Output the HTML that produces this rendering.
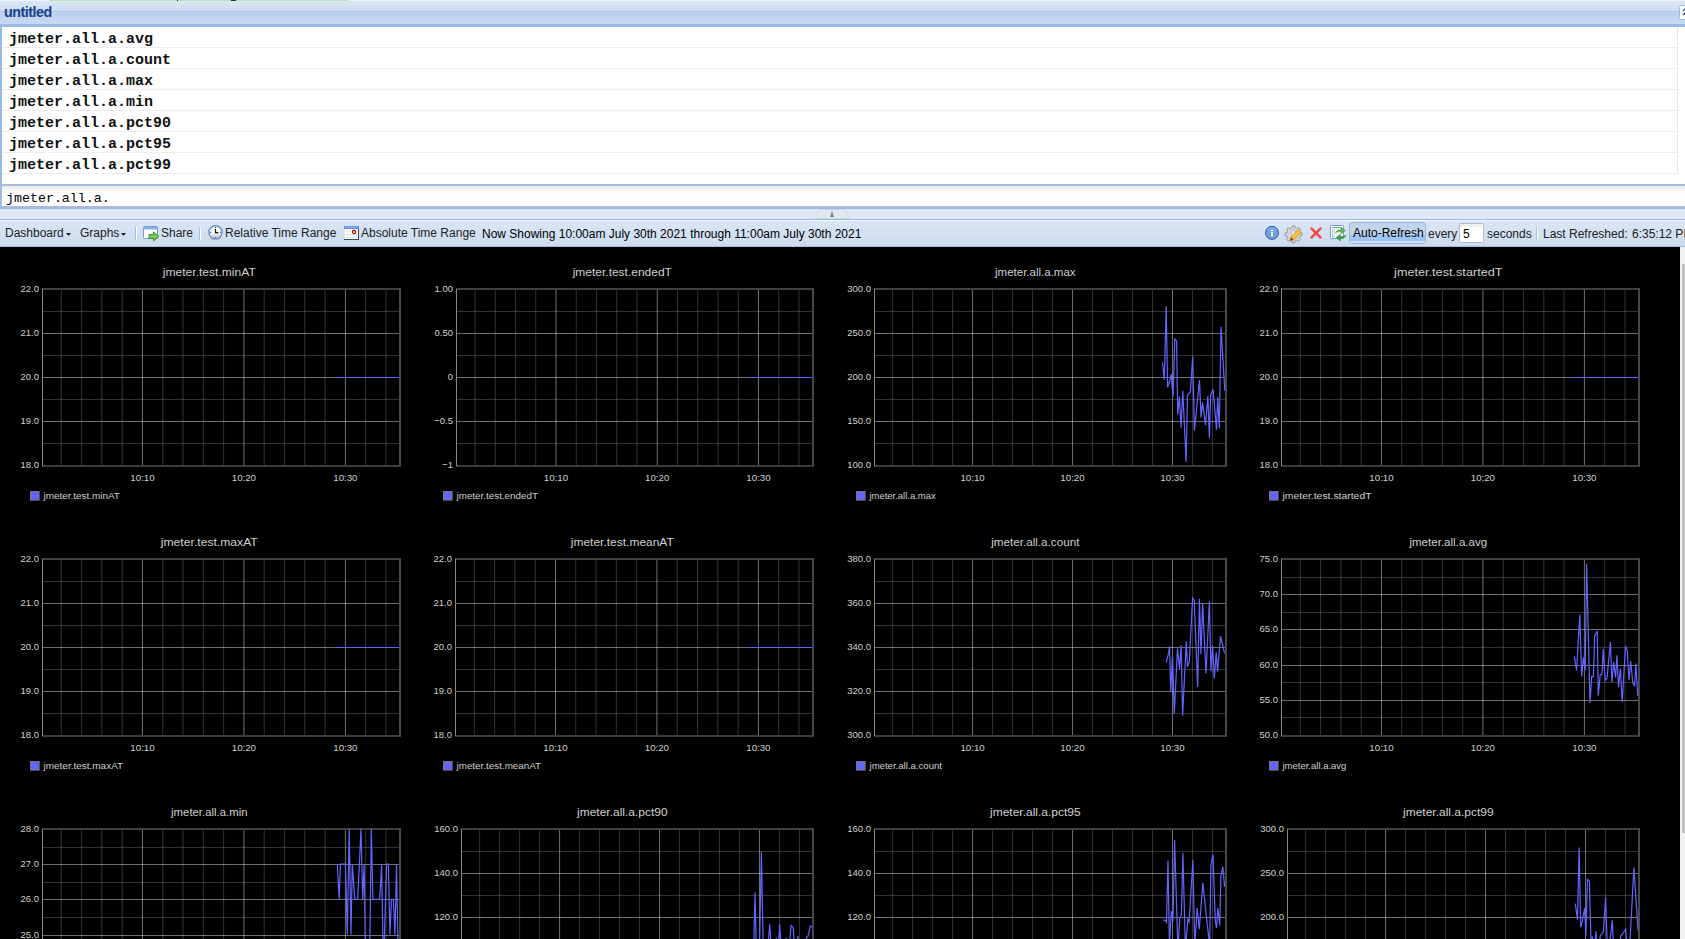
<!DOCTYPE html>
<html><head><meta charset="utf-8"><style>
*{margin:0;padding:0;box-sizing:border-box}
html,body{width:1685px;height:939px;overflow:hidden;background:#000;font-family:"Liberation Sans",sans-serif}
.abs{position:absolute}
#top0{left:0;top:0;width:1685px;height:1px;background:#eef3fa}
#green{left:49px;top:0;width:300px;height:1px;background:#b8e8b0}
#hdr{left:0;top:1px;width:1685px;height:23px;background:linear-gradient(#dae7f6,#cddcf1 10px,#aac6ea 10px,#aac6ea 11px,#bad0ee 11px,#c8daf2)}
#hdrb{left:0;top:24px;width:1685px;height:3px;background:#99bbe8}
#title{left:4px;top:4px;letter-spacing:-0.5px;font:bold 14.3px "Liberation Sans",sans-serif;color:#15428b;line-height:16px}
#list{left:0;top:27px;width:1685px;height:157px;background:#fff;border-left:2px solid #99bbe8}
.row{position:absolute;left:0;width:1676px;height:21px;border-bottom:1px solid #ededed;border-right:1px solid #e6e6e6;font:bold 15px "Liberation Mono",monospace;line-height:20px;padding-left:7px;padding-top:3px;color:#111}
#vline{left:1677px;top:27px;width:1px;height:157px;background:#e4e4e4}
#listb{left:0;top:184px;width:1685px;height:1px;background:#99bbe8}
#input{left:0;top:185px;width:1685px;height:22px;background:linear-gradient(#e6e8eb,#f6f7f7 4px,#fff 8px);border-left:1px solid #99bbe8;box-shadow:inset 1px 0 0 #b5b8c8;border-top:1px solid #b5b8c8;border-bottom:1px solid #b5b8c8;font:13.3px "Liberation Mono",monospace;line-height:19px;padding-left:5px;padding-top:3px;color:#000}
#inb{left:0;top:207px;width:1685px;height:2px;background:#99bbe8}
#split{left:0;top:209px;width:1685px;height:10px;background:#dfe8f6}
#mini{left:815px;top:209px;width:35px;height:10px;background:#cfd6e0;clip-path:polygon(11% 0,89% 0,100% 100%,0 100%)}
#mini2{left:816px;top:210px;width:33px;height:8px;background:#e3e8f0;clip-path:polygon(11% 0,89% 0,100% 100%,0 100%)}
#tri{left:830px;top:211px;width:0;height:0;border-left:2.5px solid transparent;border-right:2.5px solid transparent;border-bottom:6px solid #7b8494}
#splitb{left:0;top:219px;width:1685px;height:1px;background:#99bbe8}
#tb{left:0;top:220px;width:1685px;height:27px;background:linear-gradient(#f3f7fc,#f3f7fc 1px,#dbe6f5 1px,#ccdbef);border-bottom:1px solid #99bbe8}
.t{position:absolute;top:226px;font-size:12px;line-height:14px;color:#222;white-space:nowrap}
.sep{position:absolute;top:227px;width:2px;height:13px;border-left:1px solid #98c0f4;border-right:1px solid #fff}
#black{left:0;top:247px;width:1680px;height:692px;background:#000}
#sb{left:1680px;top:247px;width:5px;height:692px;background:#f0f0f0}
#thumb{left:1682px;top:264px;width:3px;height:569px;background:#c1c1c1}
svg text{font-family:"Liberation Sans",sans-serif;fill:#d0d0d0}
.yl{font-size:9.9px}
.xl{font-size:9.9px}
.tt{font-size:10.6px}
.lg{font-size:9.6px}
</style></head><body>
<div class="abs" id="top0"></div><div class="abs" id="green"></div><div class="abs" style="left:177px;top:0;width:1px;height:1px;background:#2a3a10"></div><div class="abs" style="left:231px;top:0;width:5px;height:1px;background:#1a3a10"></div>
<div class="abs" id="hdr"></div><div class="abs" id="hdrb"></div>
<div class="abs" id="title">untitled</div>
<div class="abs" id="list"><div class="row" style="top:0px">jmeter.all.a.avg</div>
<div class="row" style="top:21px">jmeter.all.a.count</div>
<div class="row" style="top:42px">jmeter.all.a.max</div>
<div class="row" style="top:63px">jmeter.all.a.min</div>
<div class="row" style="top:84px">jmeter.all.a.pct90</div>
<div class="row" style="top:105px">jmeter.all.a.pct95</div>
<div class="row" style="top:126px">jmeter.all.a.pct99</div></div>
<div class="abs" id="listb"></div>
<div class="abs" id="input">jmeter.all.a.</div>
<div class="abs" id="inb"></div>
<div class="abs" id="split"></div><div class="abs" id="mini"></div><div class="abs" id="mini2"></div><div class="abs" id="tri"></div>
<div class="abs" id="splitb"></div>
<div class="abs" id="tb"></div>

<svg class="abs" style="left:0;top:218px" width="1685" height="30" viewBox="0 218 1685 30">
<defs>
<linearGradient id="clk" x1="0" y1="0" x2="0" y2="1"><stop offset="0" stop-color="#fff"/><stop offset="0.5" stop-color="#f4f4f4"/><stop offset="1" stop-color="#c4c4c4"/></linearGradient>
<radialGradient id="inf" cx="0.5" cy="0.4" r="0.6"><stop offset="0" stop-color="#8db4e6"/><stop offset="1" stop-color="#4f82c8"/></radialGradient>
</defs>
<!-- dropdown arrows -->
<path d="M66 233h5l-2.5 3z" fill="#222"/>
<path d="M121 233h5l-2.5 3z" fill="#222"/>
<!-- share icon -->
<rect x="143.5" y="226.5" width="14" height="12" rx="1" fill="#fff" stroke="#6f9ad4"/>
<rect x="144" y="227" width="13" height="2.5" fill="#8fb3e6"/>
<path d="M149 234.5h4.5v-2.5l5.5 4.5-5.5 4.5v-2.5h-4.5z" fill="#7cc464" stroke="#2f8f1f" stroke-width="0.9"/>
<!-- clock -->
<ellipse cx="215.5" cy="239" rx="6" ry="0.8" fill="#9aa8b8" opacity="0.6"/>
<circle cx="215.5" cy="232.3" r="6.6" fill="url(#clk)" stroke="#6a8fd0" stroke-width="1.4"/>
<path d="M215.5 229v3.6h2.8" fill="none" stroke="#111" stroke-width="1.1"/>
<circle cx="215.5" cy="227.3" r="0.6" fill="#444"/><circle cx="215.5" cy="237.3" r="0.6" fill="#444"/>
<circle cx="210.5" cy="232.3" r="0.6" fill="#444"/><circle cx="220.5" cy="232.3" r="0.6" fill="#444"/>
<!-- calendar -->
<rect x="344" y="226" width="15" height="14" fill="#2c4a6e"/>
<rect x="344" y="226" width="14" height="13" fill="#fff"/>
<rect x="344" y="226" width="15" height="3" fill="#5e8ee6"/>
<rect x="345" y="226.8" width="12" height="1" fill="#9dbaf0"/>
<path d="M344.5 229v10M347.5 229v10M350.5 229v10M353.5 229v10M356.5 229v10M344 231.5h14M344 234.5h14M344 237.5h14" stroke="#e2e2e2" stroke-width="0.8"/>
<circle cx="354" cy="232" r="1.6" fill="none" stroke="#990000" stroke-width="1.1"/>
<!-- info -->
<circle cx="1272" cy="232.8" r="6.5" fill="url(#inf)" stroke="#2f5fb0" stroke-width="1"/>
<circle cx="1272" cy="232.8" r="5" fill="none" stroke="#bcd4f2" stroke-width="0.6" opacity="0.8"/>
<rect x="1271" y="229.8" width="2" height="1.4" fill="#fff"/>
<path d="M1271.2 232h1.6v3.4h0.9v0.9h-3.4v-0.9h0.9z" fill="#fff"/>
<!-- gear + pencil -->
<g transform="translate(1293.5 232.8)">
<path d="M-1.2-7h2.4l0.5 2.1 1.6 0.7 1.9-1.1 1.7 1.7-1.1 1.9 0.7 1.6 2.1 0.5v2.4l-2.1 0.5-0.7 1.6 1.1 1.9-1.7 1.7-1.9-1.1-1.6 0.7-0.5 2.1h-2.4l-0.5-2.1-1.6-0.7-1.9 1.1-1.7-1.7 1.1-1.9-0.7-1.6-2.1-0.5v-2.4l2.1-0.5 0.7-1.6-1.1-1.9 1.7-1.7 1.9 1.1 1.6-0.7z" fill="#d4d4d4" stroke="#8c8c8c" stroke-width="0.8"/>
<circle r="2.3" fill="#dfe8f4" stroke="#9a9a9a" stroke-width="0.6"/>
</g>
<path d="M1290 240.8l1-3.6 7.8-7.8 2.6 2.6-7.8 7.8z" fill="#f2c63a" stroke="#c98a20" stroke-width="0.8"/>
<path d="M1290 240.8l1-3.6 2.6 2.6z" fill="#7a4a10"/>
<!-- red x -->
<path d="M1311.6 228.6l8.8 8.8M1320.4 228.6l-8.8 8.8" stroke="#f04646" stroke-width="2.5" stroke-linecap="round"/>
<!-- refresh grid -->
<rect x="1330.5" y="225.5" width="13" height="13" rx="0.8" fill="#fff" stroke="#719ce0"/>
<rect x="1332" y="227" width="10" height="1" fill="#6cbf5a"/>
<rect x="1332" y="229" width="2.5" height="8.5" fill="#b6cdee"/>
<rect x="1333" y="230" width="1.2" height="1.2" fill="#fff"/><rect x="1333" y="232.4" width="1.2" height="1.2" fill="#fff"/><rect x="1333" y="234.8" width="1.2" height="1.2" fill="#fff"/>
<path d="M1335.2 232.8Q1337 229.6 1341 229.6L1341 227.3 1345.4 230.6 1341 233.9 1341 231.6Q1338 231.6 1335.2 232.8z" fill="#62b656" stroke="#3a913a" stroke-width="0.45"/>
<path d="M1346.2 235.4Q1344.4 238.6 1340.4 238.6L1340.4 240.9 1336 237.6 1340.4 234.3 1340.4 236.6Q1343.4 236.6 1346.2 235.4z" fill="#4aa445" stroke="#1f7a22" stroke-width="0.45"/>
<!-- auto refresh pressed -->
<rect x="1349.5" y="222.5" width="76" height="21" rx="2.5" fill="#c0d4ec" stroke="#9ab4d8"/>
<rect x="1350" y="235" width="75" height="6" fill="#9dc4f2"/>
<rect x="1350" y="241" width="75" height="2" fill="#cde0f6"/>
<!-- input 5 -->
<rect x="1459.5" y="223.5" width="24" height="19" rx="1" fill="#fff" stroke="#b5b8c8"/>
<rect x="1460" y="224" width="23" height="3" fill="#f0f1f3"/>
</svg>
<svg class="abs" style="left:1679px;top:5px" width="6" height="15" viewBox="0 0 6 15">
<rect x="0.5" y="0.5" width="12" height="14" rx="2" fill="#fff" stroke="#99bbe8"/>
<path d="M4 6l2.5-2.5 2.5 2.5M4 10l2.5-2.5 2.5 2.5" fill="none" stroke="#2a5a9a" stroke-width="1.3"/>
</svg>
<span class="t" style="left:5px">Dashboard</span>
<span class="t" style="left:80px">Graphs</span>
<div class="sep" style="left:135px"></div>
<span class="t" style="left:161px">Share</span>
<div class="sep" style="left:199px"></div>
<span class="t" style="left:225px">Relative Time Range</span>
<span class="t" style="left:361px">Absolute Time Range</span>
<span class="t" style="left:482px;top:227px;color:#000">Now Showing 10:00am July 30th 2021 through 11:00am July 30th 2021</span>
<span class="t" style="left:1353px;color:#000">Auto-Refresh</span>
<span class="t" style="left:1428px;top:227px">every</span>
<span class="t" style="left:1463px;top:227px;color:#000">5</span>
<span class="t" style="left:1487px;top:227px">seconds</span>
<div class="sep" style="left:1536px"></div>
<span class="t" style="left:1543px;top:227px">Last Refreshed:</span>
<span class="t" style="left:1632px;top:227px">6:35:12 PM</span>

<div class="abs" id="black"></div>
<div class="abs" id="sb"></div><div class="abs" id="thumb"></div>
<svg class="abs" style="left:0;top:0" width="1680" height="939" viewBox="0 0 1680 939">
<rect x="60.78" y="289" width="1" height="176" fill="#fff" fill-opacity="0.2"/>
<rect x="81.08" y="289" width="1" height="176" fill="#fff" fill-opacity="0.2"/>
<rect x="101.37" y="289" width="1" height="176" fill="#fff" fill-opacity="0.2"/>
<rect x="121.67" y="289" width="1" height="176" fill="#fff" fill-opacity="0.2"/>
<rect x="162.25" y="289" width="1" height="176" fill="#fff" fill-opacity="0.2"/>
<rect x="182.55" y="289" width="1" height="176" fill="#fff" fill-opacity="0.2"/>
<rect x="202.84" y="289" width="1" height="176" fill="#fff" fill-opacity="0.2"/>
<rect x="223.14" y="289" width="1" height="176" fill="#fff" fill-opacity="0.2"/>
<rect x="263.72" y="289" width="1" height="176" fill="#fff" fill-opacity="0.2"/>
<rect x="284.02" y="289" width="1" height="176" fill="#fff" fill-opacity="0.2"/>
<rect x="304.31" y="289" width="1" height="176" fill="#fff" fill-opacity="0.2"/>
<rect x="324.61" y="289" width="1" height="176" fill="#fff" fill-opacity="0.2"/>
<rect x="365.19" y="289" width="1" height="176" fill="#fff" fill-opacity="0.2"/>
<rect x="385.49" y="289" width="1" height="176" fill="#fff" fill-opacity="0.2"/>
<rect x="43" y="311" width="356" height="1" fill="#fff" fill-opacity="0.2"/>
<rect x="43" y="355" width="356" height="1" fill="#fff" fill-opacity="0.2"/>
<rect x="43" y="399" width="356" height="1" fill="#fff" fill-opacity="0.2"/>
<rect x="43" y="443" width="356" height="1" fill="#fff" fill-opacity="0.2"/>
<rect x="43" y="333" width="356" height="1" fill="#fff" fill-opacity="0.44"/>
<rect x="43" y="377" width="356" height="1" fill="#fff" fill-opacity="0.44"/>
<rect x="43" y="421" width="356" height="1" fill="#fff" fill-opacity="0.44"/>
<rect x="141.96" y="289" width="1" height="176" fill="#fff" fill-opacity="0.44"/>
<rect x="243.43" y="289" width="1" height="176" fill="#fff" fill-opacity="0.44"/>
<rect x="344.90" y="289" width="1" height="176" fill="#fff" fill-opacity="0.44"/>
<rect x="42" y="288" width="359" height="2" fill="#404040"/>
<rect x="42" y="465" width="359" height="2" fill="#3c3c3c"/>
<rect x="399" y="288" width="2" height="178" fill="#484848"/>
<rect x="42" y="289" width="1" height="177" fill="#888"/>
<text x="39" y="292.1" text-anchor="end" class="yl" textLength="18.49" lengthAdjust="spacingAndGlyphs">22.0</text>
<text x="39" y="336.1" text-anchor="end" class="yl" textLength="18.49" lengthAdjust="spacingAndGlyphs">21.0</text>
<text x="39" y="380.1" text-anchor="end" class="yl" textLength="18.49" lengthAdjust="spacingAndGlyphs">20.0</text>
<text x="39" y="424.1" text-anchor="end" class="yl" textLength="18.49" lengthAdjust="spacingAndGlyphs">19.0</text>
<text x="39" y="468.1" text-anchor="end" class="yl" textLength="18.49" lengthAdjust="spacingAndGlyphs">18.0</text>
<text x="142.5" y="481" text-anchor="middle" class="xl" textLength="24.27" lengthAdjust="spacingAndGlyphs">10:10</text>
<text x="243.9" y="481" text-anchor="middle" class="xl" textLength="24.27" lengthAdjust="spacingAndGlyphs">10:20</text>
<text x="345.4" y="481" text-anchor="middle" class="xl" textLength="24.27" lengthAdjust="spacingAndGlyphs">10:30</text>
<text x="209.3" y="276" text-anchor="middle" class="tt" textLength="93.0" lengthAdjust="spacingAndGlyphs">jmeter.test.minAT</text>
<rect x="30.5" y="491.5" width="8.6" height="8.6" fill="#6464ff" stroke="#777" stroke-width="1"/>
<text x="43.5" y="499" class="lg" textLength="76.38839999999999" lengthAdjust="spacingAndGlyphs">jmeter.test.minAT</text>
<rect x="336" y="377" width="63" height="1" fill="#6464ff"/><rect x="474.50" y="289" width="1" height="176" fill="#fff" fill-opacity="0.2"/>
<rect x="494.75" y="289" width="1" height="176" fill="#fff" fill-opacity="0.2"/>
<rect x="515.00" y="289" width="1" height="176" fill="#fff" fill-opacity="0.2"/>
<rect x="535.25" y="289" width="1" height="176" fill="#fff" fill-opacity="0.2"/>
<rect x="575.75" y="289" width="1" height="176" fill="#fff" fill-opacity="0.2"/>
<rect x="596.00" y="289" width="1" height="176" fill="#fff" fill-opacity="0.2"/>
<rect x="616.25" y="289" width="1" height="176" fill="#fff" fill-opacity="0.2"/>
<rect x="636.50" y="289" width="1" height="176" fill="#fff" fill-opacity="0.2"/>
<rect x="677.00" y="289" width="1" height="176" fill="#fff" fill-opacity="0.2"/>
<rect x="697.25" y="289" width="1" height="176" fill="#fff" fill-opacity="0.2"/>
<rect x="717.50" y="289" width="1" height="176" fill="#fff" fill-opacity="0.2"/>
<rect x="737.75" y="289" width="1" height="176" fill="#fff" fill-opacity="0.2"/>
<rect x="778.25" y="289" width="1" height="176" fill="#fff" fill-opacity="0.2"/>
<rect x="798.50" y="289" width="1" height="176" fill="#fff" fill-opacity="0.2"/>
<rect x="457" y="311" width="355" height="1" fill="#fff" fill-opacity="0.2"/>
<rect x="457" y="355" width="355" height="1" fill="#fff" fill-opacity="0.2"/>
<rect x="457" y="399" width="355" height="1" fill="#fff" fill-opacity="0.2"/>
<rect x="457" y="443" width="355" height="1" fill="#fff" fill-opacity="0.2"/>
<rect x="457" y="333" width="355" height="1" fill="#fff" fill-opacity="0.44"/>
<rect x="457" y="377" width="355" height="1" fill="#fff" fill-opacity="0.44"/>
<rect x="457" y="421" width="355" height="1" fill="#fff" fill-opacity="0.44"/>
<rect x="555.50" y="289" width="1" height="176" fill="#fff" fill-opacity="0.44"/>
<rect x="656.75" y="289" width="1" height="176" fill="#fff" fill-opacity="0.44"/>
<rect x="758.00" y="289" width="1" height="176" fill="#fff" fill-opacity="0.44"/>
<rect x="456" y="288" width="358" height="2" fill="#404040"/>
<rect x="456" y="465" width="358" height="2" fill="#3c3c3c"/>
<rect x="812" y="288" width="2" height="178" fill="#484848"/>
<rect x="456" y="289" width="1" height="177" fill="#888"/>
<text x="453" y="292.1" text-anchor="end" class="yl" textLength="18.49" lengthAdjust="spacingAndGlyphs">1.00</text>
<text x="453" y="336.1" text-anchor="end" class="yl" textLength="18.49" lengthAdjust="spacingAndGlyphs">0.50</text>
<text x="453" y="380.1" text-anchor="end" class="yl" textLength="5.28" lengthAdjust="spacingAndGlyphs">0</text>
<text x="453" y="424.1" text-anchor="end" class="yl" textLength="18.75" lengthAdjust="spacingAndGlyphs">−0.5</text>
<text x="453" y="468.1" text-anchor="end" class="yl" textLength="10.83" lengthAdjust="spacingAndGlyphs">−1</text>
<text x="556.0" y="481" text-anchor="middle" class="xl" textLength="24.27" lengthAdjust="spacingAndGlyphs">10:10</text>
<text x="657.2" y="481" text-anchor="middle" class="xl" textLength="24.27" lengthAdjust="spacingAndGlyphs">10:20</text>
<text x="758.5" y="481" text-anchor="middle" class="xl" textLength="24.27" lengthAdjust="spacingAndGlyphs">10:30</text>
<text x="622.3" y="276" text-anchor="middle" class="tt" textLength="99.2" lengthAdjust="spacingAndGlyphs">jmeter.test.endedT</text>
<rect x="443.5" y="491.5" width="8.6" height="8.6" fill="#6464ff" stroke="#777" stroke-width="1"/>
<text x="456.5" y="499" class="lg" textLength="81.48479999999999" lengthAdjust="spacingAndGlyphs">jmeter.test.endedT</text>
<rect x="749" y="377" width="63" height="1" fill="#6464ff"/><rect x="892.14" y="289" width="1" height="176" fill="#fff" fill-opacity="0.2"/>
<rect x="912.13" y="289" width="1" height="176" fill="#fff" fill-opacity="0.2"/>
<rect x="932.12" y="289" width="1" height="176" fill="#fff" fill-opacity="0.2"/>
<rect x="952.11" y="289" width="1" height="176" fill="#fff" fill-opacity="0.2"/>
<rect x="992.09" y="289" width="1" height="176" fill="#fff" fill-opacity="0.2"/>
<rect x="1012.08" y="289" width="1" height="176" fill="#fff" fill-opacity="0.2"/>
<rect x="1032.07" y="289" width="1" height="176" fill="#fff" fill-opacity="0.2"/>
<rect x="1052.06" y="289" width="1" height="176" fill="#fff" fill-opacity="0.2"/>
<rect x="1092.04" y="289" width="1" height="176" fill="#fff" fill-opacity="0.2"/>
<rect x="1112.03" y="289" width="1" height="176" fill="#fff" fill-opacity="0.2"/>
<rect x="1132.02" y="289" width="1" height="176" fill="#fff" fill-opacity="0.2"/>
<rect x="1152.01" y="289" width="1" height="176" fill="#fff" fill-opacity="0.2"/>
<rect x="1191.99" y="289" width="1" height="176" fill="#fff" fill-opacity="0.2"/>
<rect x="1211.98" y="289" width="1" height="176" fill="#fff" fill-opacity="0.2"/>
<rect x="875" y="311" width="350" height="1" fill="#fff" fill-opacity="0.2"/>
<rect x="875" y="355" width="350" height="1" fill="#fff" fill-opacity="0.2"/>
<rect x="875" y="399" width="350" height="1" fill="#fff" fill-opacity="0.2"/>
<rect x="875" y="443" width="350" height="1" fill="#fff" fill-opacity="0.2"/>
<rect x="875" y="333" width="350" height="1" fill="#fff" fill-opacity="0.44"/>
<rect x="875" y="377" width="350" height="1" fill="#fff" fill-opacity="0.44"/>
<rect x="875" y="421" width="350" height="1" fill="#fff" fill-opacity="0.44"/>
<rect x="972.10" y="289" width="1" height="176" fill="#fff" fill-opacity="0.44"/>
<rect x="1072.05" y="289" width="1" height="176" fill="#fff" fill-opacity="0.44"/>
<rect x="1172.00" y="289" width="1" height="176" fill="#fff" fill-opacity="0.44"/>
<rect x="874" y="288" width="353" height="2" fill="#404040"/>
<rect x="874" y="465" width="353" height="2" fill="#3c3c3c"/>
<rect x="1225" y="288" width="2" height="178" fill="#484848"/>
<rect x="874" y="289" width="1" height="177" fill="#888"/>
<text x="871" y="292.1" text-anchor="end" class="yl" textLength="23.77" lengthAdjust="spacingAndGlyphs">300.0</text>
<text x="871" y="336.1" text-anchor="end" class="yl" textLength="23.77" lengthAdjust="spacingAndGlyphs">250.0</text>
<text x="871" y="380.1" text-anchor="end" class="yl" textLength="23.77" lengthAdjust="spacingAndGlyphs">200.0</text>
<text x="871" y="424.1" text-anchor="end" class="yl" textLength="23.77" lengthAdjust="spacingAndGlyphs">150.0</text>
<text x="871" y="468.1" text-anchor="end" class="yl" textLength="23.77" lengthAdjust="spacingAndGlyphs">100.0</text>
<text x="972.6" y="481" text-anchor="middle" class="xl" textLength="24.27" lengthAdjust="spacingAndGlyphs">10:10</text>
<text x="1072.5" y="481" text-anchor="middle" class="xl" textLength="24.27" lengthAdjust="spacingAndGlyphs">10:20</text>
<text x="1172.5" y="481" text-anchor="middle" class="xl" textLength="24.27" lengthAdjust="spacingAndGlyphs">10:30</text>
<text x="1035.3" y="276" text-anchor="middle" class="tt" textLength="80.5" lengthAdjust="spacingAndGlyphs">jmeter.all.a.max</text>
<rect x="856.5" y="491.5" width="8.6" height="8.6" fill="#6464ff" stroke="#777" stroke-width="1"/>
<text x="869.5" y="499" class="lg" textLength="66.1134" lengthAdjust="spacingAndGlyphs">jmeter.all.a.max</text>
<polyline points="1162.5,362.5 1164.3,379.6 1166.2,306.3 1167.6,387.2 1170.1,379.6 1171.2,374.0 1173.0,396.8 1174.8,338.9 1176.6,341.2 1177.7,414.5 1179.4,396.3 1181.0,427.7 1182.8,390.7 1186.1,462.0 1187.5,395.3 1190.4,391.7 1192.7,356.6 1194.4,430.7 1199.5,380.1 1201.0,417.5 1202.5,402.4 1205.5,425.1 1207.8,396.3 1209.4,438.3 1210.6,395.3 1213.1,389.2 1216.5,429.7 1217.7,397.3 1219.3,428.2 1221.0,326.7 1224.8,390.7" fill="none" stroke="#6464ff" stroke-width="1.2" stroke-linejoin="miter"/><rect x="1299.78" y="289" width="1" height="176" fill="#fff" fill-opacity="0.2"/>
<rect x="1320.08" y="289" width="1" height="176" fill="#fff" fill-opacity="0.2"/>
<rect x="1340.37" y="289" width="1" height="176" fill="#fff" fill-opacity="0.2"/>
<rect x="1360.67" y="289" width="1" height="176" fill="#fff" fill-opacity="0.2"/>
<rect x="1401.25" y="289" width="1" height="176" fill="#fff" fill-opacity="0.2"/>
<rect x="1421.55" y="289" width="1" height="176" fill="#fff" fill-opacity="0.2"/>
<rect x="1441.84" y="289" width="1" height="176" fill="#fff" fill-opacity="0.2"/>
<rect x="1462.14" y="289" width="1" height="176" fill="#fff" fill-opacity="0.2"/>
<rect x="1502.72" y="289" width="1" height="176" fill="#fff" fill-opacity="0.2"/>
<rect x="1523.02" y="289" width="1" height="176" fill="#fff" fill-opacity="0.2"/>
<rect x="1543.31" y="289" width="1" height="176" fill="#fff" fill-opacity="0.2"/>
<rect x="1563.61" y="289" width="1" height="176" fill="#fff" fill-opacity="0.2"/>
<rect x="1604.19" y="289" width="1" height="176" fill="#fff" fill-opacity="0.2"/>
<rect x="1624.49" y="289" width="1" height="176" fill="#fff" fill-opacity="0.2"/>
<rect x="1282" y="311" width="356" height="1" fill="#fff" fill-opacity="0.2"/>
<rect x="1282" y="355" width="356" height="1" fill="#fff" fill-opacity="0.2"/>
<rect x="1282" y="399" width="356" height="1" fill="#fff" fill-opacity="0.2"/>
<rect x="1282" y="443" width="356" height="1" fill="#fff" fill-opacity="0.2"/>
<rect x="1282" y="333" width="356" height="1" fill="#fff" fill-opacity="0.44"/>
<rect x="1282" y="377" width="356" height="1" fill="#fff" fill-opacity="0.44"/>
<rect x="1282" y="421" width="356" height="1" fill="#fff" fill-opacity="0.44"/>
<rect x="1380.96" y="289" width="1" height="176" fill="#fff" fill-opacity="0.44"/>
<rect x="1482.43" y="289" width="1" height="176" fill="#fff" fill-opacity="0.44"/>
<rect x="1583.90" y="289" width="1" height="176" fill="#fff" fill-opacity="0.44"/>
<rect x="1281" y="288" width="359" height="2" fill="#404040"/>
<rect x="1281" y="465" width="359" height="2" fill="#3c3c3c"/>
<rect x="1638" y="288" width="2" height="178" fill="#484848"/>
<rect x="1281" y="289" width="1" height="177" fill="#888"/>
<text x="1278" y="292.1" text-anchor="end" class="yl" textLength="18.49" lengthAdjust="spacingAndGlyphs">22.0</text>
<text x="1278" y="336.1" text-anchor="end" class="yl" textLength="18.49" lengthAdjust="spacingAndGlyphs">21.0</text>
<text x="1278" y="380.1" text-anchor="end" class="yl" textLength="18.49" lengthAdjust="spacingAndGlyphs">20.0</text>
<text x="1278" y="424.1" text-anchor="end" class="yl" textLength="18.49" lengthAdjust="spacingAndGlyphs">19.0</text>
<text x="1278" y="468.1" text-anchor="end" class="yl" textLength="18.49" lengthAdjust="spacingAndGlyphs">18.0</text>
<text x="1381.5" y="481" text-anchor="middle" class="xl" textLength="24.27" lengthAdjust="spacingAndGlyphs">10:10</text>
<text x="1482.9" y="481" text-anchor="middle" class="xl" textLength="24.27" lengthAdjust="spacingAndGlyphs">10:20</text>
<text x="1584.4" y="481" text-anchor="middle" class="xl" textLength="24.27" lengthAdjust="spacingAndGlyphs">10:30</text>
<text x="1448.3" y="276" text-anchor="middle" class="tt" textLength="108.39999999999999" lengthAdjust="spacingAndGlyphs">jmeter.test.startedT</text>
<rect x="1269.5" y="491.5" width="8.6" height="8.6" fill="#6464ff" stroke="#777" stroke-width="1"/>
<text x="1282.5" y="499" class="lg" textLength="89.04719999999999" lengthAdjust="spacingAndGlyphs">jmeter.test.startedT</text>
<rect x="1575" y="377" width="63" height="1" fill="#6464ff"/><rect x="60.78" y="559" width="1" height="176" fill="#fff" fill-opacity="0.2"/>
<rect x="81.08" y="559" width="1" height="176" fill="#fff" fill-opacity="0.2"/>
<rect x="101.37" y="559" width="1" height="176" fill="#fff" fill-opacity="0.2"/>
<rect x="121.67" y="559" width="1" height="176" fill="#fff" fill-opacity="0.2"/>
<rect x="162.25" y="559" width="1" height="176" fill="#fff" fill-opacity="0.2"/>
<rect x="182.55" y="559" width="1" height="176" fill="#fff" fill-opacity="0.2"/>
<rect x="202.84" y="559" width="1" height="176" fill="#fff" fill-opacity="0.2"/>
<rect x="223.14" y="559" width="1" height="176" fill="#fff" fill-opacity="0.2"/>
<rect x="263.72" y="559" width="1" height="176" fill="#fff" fill-opacity="0.2"/>
<rect x="284.02" y="559" width="1" height="176" fill="#fff" fill-opacity="0.2"/>
<rect x="304.31" y="559" width="1" height="176" fill="#fff" fill-opacity="0.2"/>
<rect x="324.61" y="559" width="1" height="176" fill="#fff" fill-opacity="0.2"/>
<rect x="365.19" y="559" width="1" height="176" fill="#fff" fill-opacity="0.2"/>
<rect x="385.49" y="559" width="1" height="176" fill="#fff" fill-opacity="0.2"/>
<rect x="43" y="581" width="356" height="1" fill="#fff" fill-opacity="0.2"/>
<rect x="43" y="625" width="356" height="1" fill="#fff" fill-opacity="0.2"/>
<rect x="43" y="669" width="356" height="1" fill="#fff" fill-opacity="0.2"/>
<rect x="43" y="713" width="356" height="1" fill="#fff" fill-opacity="0.2"/>
<rect x="43" y="603" width="356" height="1" fill="#fff" fill-opacity="0.44"/>
<rect x="43" y="647" width="356" height="1" fill="#fff" fill-opacity="0.44"/>
<rect x="43" y="691" width="356" height="1" fill="#fff" fill-opacity="0.44"/>
<rect x="141.96" y="559" width="1" height="176" fill="#fff" fill-opacity="0.44"/>
<rect x="243.43" y="559" width="1" height="176" fill="#fff" fill-opacity="0.44"/>
<rect x="344.90" y="559" width="1" height="176" fill="#fff" fill-opacity="0.44"/>
<rect x="42" y="558" width="359" height="2" fill="#404040"/>
<rect x="42" y="735" width="359" height="2" fill="#3c3c3c"/>
<rect x="399" y="558" width="2" height="178" fill="#484848"/>
<rect x="42" y="559" width="1" height="177" fill="#888"/>
<text x="39" y="562.1" text-anchor="end" class="yl" textLength="18.49" lengthAdjust="spacingAndGlyphs">22.0</text>
<text x="39" y="606.1" text-anchor="end" class="yl" textLength="18.49" lengthAdjust="spacingAndGlyphs">21.0</text>
<text x="39" y="650.1" text-anchor="end" class="yl" textLength="18.49" lengthAdjust="spacingAndGlyphs">20.0</text>
<text x="39" y="694.1" text-anchor="end" class="yl" textLength="18.49" lengthAdjust="spacingAndGlyphs">19.0</text>
<text x="39" y="738.1" text-anchor="end" class="yl" textLength="18.49" lengthAdjust="spacingAndGlyphs">18.0</text>
<text x="142.5" y="751" text-anchor="middle" class="xl" textLength="24.27" lengthAdjust="spacingAndGlyphs">10:10</text>
<text x="243.9" y="751" text-anchor="middle" class="xl" textLength="24.27" lengthAdjust="spacingAndGlyphs">10:20</text>
<text x="345.4" y="751" text-anchor="middle" class="xl" textLength="24.27" lengthAdjust="spacingAndGlyphs">10:30</text>
<text x="209.3" y="546" text-anchor="middle" class="tt" textLength="97.0" lengthAdjust="spacingAndGlyphs">jmeter.test.maxAT</text>
<rect x="30.5" y="761.5" width="8.6" height="8.6" fill="#6464ff" stroke="#777" stroke-width="1"/>
<text x="43.5" y="769" class="lg" textLength="79.67639999999999" lengthAdjust="spacingAndGlyphs">jmeter.test.maxAT</text>
<rect x="336" y="647" width="63" height="1" fill="#6464ff"/><rect x="473.78" y="559" width="1" height="176" fill="#fff" fill-opacity="0.2"/>
<rect x="494.08" y="559" width="1" height="176" fill="#fff" fill-opacity="0.2"/>
<rect x="514.37" y="559" width="1" height="176" fill="#fff" fill-opacity="0.2"/>
<rect x="534.67" y="559" width="1" height="176" fill="#fff" fill-opacity="0.2"/>
<rect x="575.25" y="559" width="1" height="176" fill="#fff" fill-opacity="0.2"/>
<rect x="595.55" y="559" width="1" height="176" fill="#fff" fill-opacity="0.2"/>
<rect x="615.84" y="559" width="1" height="176" fill="#fff" fill-opacity="0.2"/>
<rect x="636.14" y="559" width="1" height="176" fill="#fff" fill-opacity="0.2"/>
<rect x="676.72" y="559" width="1" height="176" fill="#fff" fill-opacity="0.2"/>
<rect x="697.02" y="559" width="1" height="176" fill="#fff" fill-opacity="0.2"/>
<rect x="717.31" y="559" width="1" height="176" fill="#fff" fill-opacity="0.2"/>
<rect x="737.61" y="559" width="1" height="176" fill="#fff" fill-opacity="0.2"/>
<rect x="778.19" y="559" width="1" height="176" fill="#fff" fill-opacity="0.2"/>
<rect x="798.49" y="559" width="1" height="176" fill="#fff" fill-opacity="0.2"/>
<rect x="456" y="581" width="356" height="1" fill="#fff" fill-opacity="0.2"/>
<rect x="456" y="625" width="356" height="1" fill="#fff" fill-opacity="0.2"/>
<rect x="456" y="669" width="356" height="1" fill="#fff" fill-opacity="0.2"/>
<rect x="456" y="713" width="356" height="1" fill="#fff" fill-opacity="0.2"/>
<rect x="456" y="603" width="356" height="1" fill="#fff" fill-opacity="0.44"/>
<rect x="456" y="647" width="356" height="1" fill="#fff" fill-opacity="0.44"/>
<rect x="456" y="691" width="356" height="1" fill="#fff" fill-opacity="0.44"/>
<rect x="554.96" y="559" width="1" height="176" fill="#fff" fill-opacity="0.44"/>
<rect x="656.43" y="559" width="1" height="176" fill="#fff" fill-opacity="0.44"/>
<rect x="757.90" y="559" width="1" height="176" fill="#fff" fill-opacity="0.44"/>
<rect x="455" y="558" width="359" height="2" fill="#404040"/>
<rect x="455" y="735" width="359" height="2" fill="#3c3c3c"/>
<rect x="812" y="558" width="2" height="178" fill="#484848"/>
<rect x="455" y="559" width="1" height="177" fill="#888"/>
<text x="452" y="562.1" text-anchor="end" class="yl" textLength="18.49" lengthAdjust="spacingAndGlyphs">22.0</text>
<text x="452" y="606.1" text-anchor="end" class="yl" textLength="18.49" lengthAdjust="spacingAndGlyphs">21.0</text>
<text x="452" y="650.1" text-anchor="end" class="yl" textLength="18.49" lengthAdjust="spacingAndGlyphs">20.0</text>
<text x="452" y="694.1" text-anchor="end" class="yl" textLength="18.49" lengthAdjust="spacingAndGlyphs">19.0</text>
<text x="452" y="738.1" text-anchor="end" class="yl" textLength="18.49" lengthAdjust="spacingAndGlyphs">18.0</text>
<text x="555.5" y="751" text-anchor="middle" class="xl" textLength="24.27" lengthAdjust="spacingAndGlyphs">10:10</text>
<text x="656.9" y="751" text-anchor="middle" class="xl" textLength="24.27" lengthAdjust="spacingAndGlyphs">10:20</text>
<text x="758.4" y="751" text-anchor="middle" class="xl" textLength="24.27" lengthAdjust="spacingAndGlyphs">10:30</text>
<text x="622.3" y="546" text-anchor="middle" class="tt" textLength="103.0" lengthAdjust="spacingAndGlyphs">jmeter.test.meanAT</text>
<rect x="443.5" y="761.5" width="8.6" height="8.6" fill="#6464ff" stroke="#777" stroke-width="1"/>
<text x="456.5" y="769" class="lg" textLength="84.60839999999999" lengthAdjust="spacingAndGlyphs">jmeter.test.meanAT</text>
<rect x="749" y="647" width="63" height="1" fill="#6464ff"/><rect x="892.14" y="559" width="1" height="176" fill="#fff" fill-opacity="0.2"/>
<rect x="912.13" y="559" width="1" height="176" fill="#fff" fill-opacity="0.2"/>
<rect x="932.12" y="559" width="1" height="176" fill="#fff" fill-opacity="0.2"/>
<rect x="952.11" y="559" width="1" height="176" fill="#fff" fill-opacity="0.2"/>
<rect x="992.09" y="559" width="1" height="176" fill="#fff" fill-opacity="0.2"/>
<rect x="1012.08" y="559" width="1" height="176" fill="#fff" fill-opacity="0.2"/>
<rect x="1032.07" y="559" width="1" height="176" fill="#fff" fill-opacity="0.2"/>
<rect x="1052.06" y="559" width="1" height="176" fill="#fff" fill-opacity="0.2"/>
<rect x="1092.04" y="559" width="1" height="176" fill="#fff" fill-opacity="0.2"/>
<rect x="1112.03" y="559" width="1" height="176" fill="#fff" fill-opacity="0.2"/>
<rect x="1132.02" y="559" width="1" height="176" fill="#fff" fill-opacity="0.2"/>
<rect x="1152.01" y="559" width="1" height="176" fill="#fff" fill-opacity="0.2"/>
<rect x="1191.99" y="559" width="1" height="176" fill="#fff" fill-opacity="0.2"/>
<rect x="1211.98" y="559" width="1" height="176" fill="#fff" fill-opacity="0.2"/>
<rect x="875" y="581" width="350" height="1" fill="#fff" fill-opacity="0.2"/>
<rect x="875" y="625" width="350" height="1" fill="#fff" fill-opacity="0.2"/>
<rect x="875" y="669" width="350" height="1" fill="#fff" fill-opacity="0.2"/>
<rect x="875" y="713" width="350" height="1" fill="#fff" fill-opacity="0.2"/>
<rect x="875" y="603" width="350" height="1" fill="#fff" fill-opacity="0.44"/>
<rect x="875" y="647" width="350" height="1" fill="#fff" fill-opacity="0.44"/>
<rect x="875" y="691" width="350" height="1" fill="#fff" fill-opacity="0.44"/>
<rect x="972.10" y="559" width="1" height="176" fill="#fff" fill-opacity="0.44"/>
<rect x="1072.05" y="559" width="1" height="176" fill="#fff" fill-opacity="0.44"/>
<rect x="1172.00" y="559" width="1" height="176" fill="#fff" fill-opacity="0.44"/>
<rect x="874" y="558" width="353" height="2" fill="#404040"/>
<rect x="874" y="735" width="353" height="2" fill="#3c3c3c"/>
<rect x="1225" y="558" width="2" height="178" fill="#484848"/>
<rect x="874" y="559" width="1" height="177" fill="#888"/>
<text x="871" y="562.1" text-anchor="end" class="yl" textLength="23.77" lengthAdjust="spacingAndGlyphs">380.0</text>
<text x="871" y="606.1" text-anchor="end" class="yl" textLength="23.77" lengthAdjust="spacingAndGlyphs">360.0</text>
<text x="871" y="650.1" text-anchor="end" class="yl" textLength="23.77" lengthAdjust="spacingAndGlyphs">340.0</text>
<text x="871" y="694.1" text-anchor="end" class="yl" textLength="23.77" lengthAdjust="spacingAndGlyphs">320.0</text>
<text x="871" y="738.1" text-anchor="end" class="yl" textLength="23.77" lengthAdjust="spacingAndGlyphs">300.0</text>
<text x="972.6" y="751" text-anchor="middle" class="xl" textLength="24.27" lengthAdjust="spacingAndGlyphs">10:10</text>
<text x="1072.5" y="751" text-anchor="middle" class="xl" textLength="24.27" lengthAdjust="spacingAndGlyphs">10:20</text>
<text x="1172.5" y="751" text-anchor="middle" class="xl" textLength="24.27" lengthAdjust="spacingAndGlyphs">10:30</text>
<text x="1035.3" y="546" text-anchor="middle" class="tt" textLength="88.3" lengthAdjust="spacingAndGlyphs">jmeter.all.a.count</text>
<rect x="856.5" y="761.5" width="8.6" height="8.6" fill="#6464ff" stroke="#777" stroke-width="1"/>
<text x="869.5" y="769" class="lg" textLength="72.52499999999999" lengthAdjust="spacingAndGlyphs">jmeter.all.a.count</text>
<polyline points="1166.2,662.6 1168.4,654.0 1169.6,646.3 1170.7,691.6 1172.5,656.3 1174.3,713.4 1177.5,648.2 1179.5,669.0 1181.1,645.4 1182.6,715.6 1186.3,641.4 1187.4,666.7 1189.3,661.7 1192.6,598.2 1194.2,600.4 1197.7,687.1 1199.4,599.1 1201.0,653.9 1202.6,603.6 1206.0,673.5 1209.4,601.3 1211.0,671.2 1212.6,645.3 1214.3,678.5 1216.2,652.5 1217.5,671.7 1220.5,636.2 1224.6,653.4" fill="none" stroke="#6464ff" stroke-width="1.2" stroke-linejoin="miter"/><rect x="1299.78" y="559" width="1" height="176" fill="#fff" fill-opacity="0.2"/>
<rect x="1320.08" y="559" width="1" height="176" fill="#fff" fill-opacity="0.2"/>
<rect x="1340.37" y="559" width="1" height="176" fill="#fff" fill-opacity="0.2"/>
<rect x="1360.67" y="559" width="1" height="176" fill="#fff" fill-opacity="0.2"/>
<rect x="1401.25" y="559" width="1" height="176" fill="#fff" fill-opacity="0.2"/>
<rect x="1421.55" y="559" width="1" height="176" fill="#fff" fill-opacity="0.2"/>
<rect x="1441.84" y="559" width="1" height="176" fill="#fff" fill-opacity="0.2"/>
<rect x="1462.14" y="559" width="1" height="176" fill="#fff" fill-opacity="0.2"/>
<rect x="1502.72" y="559" width="1" height="176" fill="#fff" fill-opacity="0.2"/>
<rect x="1523.02" y="559" width="1" height="176" fill="#fff" fill-opacity="0.2"/>
<rect x="1543.31" y="559" width="1" height="176" fill="#fff" fill-opacity="0.2"/>
<rect x="1563.61" y="559" width="1" height="176" fill="#fff" fill-opacity="0.2"/>
<rect x="1604.19" y="559" width="1" height="176" fill="#fff" fill-opacity="0.2"/>
<rect x="1624.49" y="559" width="1" height="176" fill="#fff" fill-opacity="0.2"/>
<rect x="1282" y="577" width="356" height="1" fill="#fff" fill-opacity="0.2"/>
<rect x="1282" y="612" width="356" height="1" fill="#fff" fill-opacity="0.2"/>
<rect x="1282" y="647" width="356" height="1" fill="#fff" fill-opacity="0.2"/>
<rect x="1282" y="682" width="356" height="1" fill="#fff" fill-opacity="0.2"/>
<rect x="1282" y="717" width="356" height="1" fill="#fff" fill-opacity="0.2"/>
<rect x="1282" y="594" width="356" height="1" fill="#fff" fill-opacity="0.44"/>
<rect x="1282" y="629" width="356" height="1" fill="#fff" fill-opacity="0.44"/>
<rect x="1282" y="665" width="356" height="1" fill="#fff" fill-opacity="0.44"/>
<rect x="1282" y="700" width="356" height="1" fill="#fff" fill-opacity="0.44"/>
<rect x="1380.96" y="559" width="1" height="176" fill="#fff" fill-opacity="0.44"/>
<rect x="1482.43" y="559" width="1" height="176" fill="#fff" fill-opacity="0.44"/>
<rect x="1583.90" y="559" width="1" height="176" fill="#fff" fill-opacity="0.44"/>
<rect x="1281" y="558" width="359" height="2" fill="#404040"/>
<rect x="1281" y="735" width="359" height="2" fill="#3c3c3c"/>
<rect x="1638" y="558" width="2" height="178" fill="#484848"/>
<rect x="1281" y="559" width="1" height="177" fill="#888"/>
<text x="1278" y="562.1" text-anchor="end" class="yl" textLength="18.49" lengthAdjust="spacingAndGlyphs">75.0</text>
<text x="1278" y="597.1" text-anchor="end" class="yl" textLength="18.49" lengthAdjust="spacingAndGlyphs">70.0</text>
<text x="1278" y="632.1" text-anchor="end" class="yl" textLength="18.49" lengthAdjust="spacingAndGlyphs">65.0</text>
<text x="1278" y="668.1" text-anchor="end" class="yl" textLength="18.49" lengthAdjust="spacingAndGlyphs">60.0</text>
<text x="1278" y="703.1" text-anchor="end" class="yl" textLength="18.49" lengthAdjust="spacingAndGlyphs">55.0</text>
<text x="1278" y="738.1" text-anchor="end" class="yl" textLength="18.49" lengthAdjust="spacingAndGlyphs">50.0</text>
<text x="1381.5" y="751" text-anchor="middle" class="xl" textLength="24.27" lengthAdjust="spacingAndGlyphs">10:10</text>
<text x="1482.9" y="751" text-anchor="middle" class="xl" textLength="24.27" lengthAdjust="spacingAndGlyphs">10:20</text>
<text x="1584.4" y="751" text-anchor="middle" class="xl" textLength="24.27" lengthAdjust="spacingAndGlyphs">10:30</text>
<text x="1448.3" y="546" text-anchor="middle" class="tt" textLength="77.8" lengthAdjust="spacingAndGlyphs">jmeter.all.a.avg</text>
<rect x="1269.5" y="761.5" width="8.6" height="8.6" fill="#6464ff" stroke="#777" stroke-width="1"/>
<text x="1282.5" y="769" class="lg" textLength="63.894" lengthAdjust="spacingAndGlyphs">jmeter.all.a.avg</text>
<polyline points="1574.3,656.3 1576.6,670.3 1579.8,614.6 1581.6,676.6 1583.4,657.6 1585.2,670.3 1586.6,563.4 1590.0,702.9 1591.7,676.6 1593.4,676.6 1594.7,635.9 1597.2,630.9 1598.3,695.7 1600.2,674.8 1602.0,674.4 1603.3,649.0 1605.1,680.3 1607.0,678.4 1610.4,641.8 1611.9,682.5 1613.6,662.1 1615.6,677.5 1616.9,655.3 1618.5,687.5 1620.4,668.5 1622.2,702.0 1625.5,646.3 1627.3,650.4 1628.9,680.3 1630.7,661.2 1632.8,683.0 1634.6,685.7 1635.8,663.5 1637.7,695.7" fill="none" stroke="#6464ff" stroke-width="1.2" stroke-linejoin="miter"/><rect x="60.78" y="829" width="1" height="176" fill="#fff" fill-opacity="0.2"/>
<rect x="81.08" y="829" width="1" height="176" fill="#fff" fill-opacity="0.2"/>
<rect x="101.37" y="829" width="1" height="176" fill="#fff" fill-opacity="0.2"/>
<rect x="121.67" y="829" width="1" height="176" fill="#fff" fill-opacity="0.2"/>
<rect x="162.25" y="829" width="1" height="176" fill="#fff" fill-opacity="0.2"/>
<rect x="182.55" y="829" width="1" height="176" fill="#fff" fill-opacity="0.2"/>
<rect x="202.84" y="829" width="1" height="176" fill="#fff" fill-opacity="0.2"/>
<rect x="223.14" y="829" width="1" height="176" fill="#fff" fill-opacity="0.2"/>
<rect x="263.72" y="829" width="1" height="176" fill="#fff" fill-opacity="0.2"/>
<rect x="284.02" y="829" width="1" height="176" fill="#fff" fill-opacity="0.2"/>
<rect x="304.31" y="829" width="1" height="176" fill="#fff" fill-opacity="0.2"/>
<rect x="324.61" y="829" width="1" height="176" fill="#fff" fill-opacity="0.2"/>
<rect x="365.19" y="829" width="1" height="176" fill="#fff" fill-opacity="0.2"/>
<rect x="385.49" y="829" width="1" height="176" fill="#fff" fill-opacity="0.2"/>
<rect x="43" y="847" width="356" height="1" fill="#fff" fill-opacity="0.2"/>
<rect x="43" y="882" width="356" height="1" fill="#fff" fill-opacity="0.2"/>
<rect x="43" y="917" width="356" height="1" fill="#fff" fill-opacity="0.2"/>
<rect x="43" y="952" width="356" height="1" fill="#fff" fill-opacity="0.2"/>
<rect x="43" y="987" width="356" height="1" fill="#fff" fill-opacity="0.2"/>
<rect x="43" y="864" width="356" height="1" fill="#fff" fill-opacity="0.44"/>
<rect x="43" y="899" width="356" height="1" fill="#fff" fill-opacity="0.44"/>
<rect x="43" y="935" width="356" height="1" fill="#fff" fill-opacity="0.44"/>
<rect x="43" y="970" width="356" height="1" fill="#fff" fill-opacity="0.44"/>
<rect x="141.96" y="829" width="1" height="176" fill="#fff" fill-opacity="0.44"/>
<rect x="243.43" y="829" width="1" height="176" fill="#fff" fill-opacity="0.44"/>
<rect x="344.90" y="829" width="1" height="176" fill="#fff" fill-opacity="0.44"/>
<rect x="42" y="828" width="359" height="2" fill="#404040"/>
<rect x="42" y="1005" width="359" height="2" fill="#3c3c3c"/>
<rect x="399" y="828" width="2" height="178" fill="#484848"/>
<rect x="42" y="829" width="1" height="177" fill="#888"/>
<text x="39" y="832.1" text-anchor="end" class="yl" textLength="18.49" lengthAdjust="spacingAndGlyphs">28.0</text>
<text x="39" y="867.1" text-anchor="end" class="yl" textLength="18.49" lengthAdjust="spacingAndGlyphs">27.0</text>
<text x="39" y="902.1" text-anchor="end" class="yl" textLength="18.49" lengthAdjust="spacingAndGlyphs">26.0</text>
<text x="39" y="938.1" text-anchor="end" class="yl" textLength="18.49" lengthAdjust="spacingAndGlyphs">25.0</text>
<text x="39" y="973.1" text-anchor="end" class="yl" textLength="18.49" lengthAdjust="spacingAndGlyphs">24.0</text>
<text x="39" y="1008.1" text-anchor="end" class="yl" textLength="18.49" lengthAdjust="spacingAndGlyphs">23.0</text>
<text x="142.5" y="1021" text-anchor="middle" class="xl" textLength="24.27" lengthAdjust="spacingAndGlyphs">10:10</text>
<text x="243.9" y="1021" text-anchor="middle" class="xl" textLength="24.27" lengthAdjust="spacingAndGlyphs">10:20</text>
<text x="345.4" y="1021" text-anchor="middle" class="xl" textLength="24.27" lengthAdjust="spacingAndGlyphs">10:30</text>
<text x="209.3" y="816" text-anchor="middle" class="tt" textLength="76.39999999999999" lengthAdjust="spacingAndGlyphs">jmeter.all.a.min</text>
<rect x="30.5" y="1031.5" width="8.6" height="8.6" fill="#6464ff" stroke="#777" stroke-width="1"/>
<text x="43.5" y="1039" class="lg" textLength="62.743199999999995" lengthAdjust="spacingAndGlyphs">jmeter.all.a.min</text>
<polyline points="337.3,864.2 339.2,899.4 340.5,864.2 345.4,864.2 347.3,934.6 349.2,829.0 351.0,934.6 352.3,864.2 354.8,899.4 357.7,899.4 361.0,829.0 362.7,899.4 364.2,864.2 365.6,969.8 369.5,969.8 371.3,829.0 372.9,899.4 379.7,899.4 381.6,864.2 383.4,969.8 386.6,864.2 388.4,864.2 389.9,934.6 391.5,899.4 393.4,899.4 395.0,934.6 396.5,864.2 398.4,969.8 399.5,952.2" fill="none" stroke="#6464ff" stroke-width="1.2" stroke-linejoin="miter"/><rect x="479.14" y="829" width="1" height="176" fill="#fff" fill-opacity="0.2"/>
<rect x="499.13" y="829" width="1" height="176" fill="#fff" fill-opacity="0.2"/>
<rect x="519.12" y="829" width="1" height="176" fill="#fff" fill-opacity="0.2"/>
<rect x="539.11" y="829" width="1" height="176" fill="#fff" fill-opacity="0.2"/>
<rect x="579.09" y="829" width="1" height="176" fill="#fff" fill-opacity="0.2"/>
<rect x="599.08" y="829" width="1" height="176" fill="#fff" fill-opacity="0.2"/>
<rect x="619.07" y="829" width="1" height="176" fill="#fff" fill-opacity="0.2"/>
<rect x="639.06" y="829" width="1" height="176" fill="#fff" fill-opacity="0.2"/>
<rect x="679.04" y="829" width="1" height="176" fill="#fff" fill-opacity="0.2"/>
<rect x="699.03" y="829" width="1" height="176" fill="#fff" fill-opacity="0.2"/>
<rect x="719.02" y="829" width="1" height="176" fill="#fff" fill-opacity="0.2"/>
<rect x="739.01" y="829" width="1" height="176" fill="#fff" fill-opacity="0.2"/>
<rect x="778.99" y="829" width="1" height="176" fill="#fff" fill-opacity="0.2"/>
<rect x="798.98" y="829" width="1" height="176" fill="#fff" fill-opacity="0.2"/>
<rect x="462" y="851" width="350" height="1" fill="#fff" fill-opacity="0.2"/>
<rect x="462" y="895" width="350" height="1" fill="#fff" fill-opacity="0.2"/>
<rect x="462" y="939" width="350" height="1" fill="#fff" fill-opacity="0.2"/>
<rect x="462" y="983" width="350" height="1" fill="#fff" fill-opacity="0.2"/>
<rect x="462" y="873" width="350" height="1" fill="#fff" fill-opacity="0.44"/>
<rect x="462" y="917" width="350" height="1" fill="#fff" fill-opacity="0.44"/>
<rect x="462" y="961" width="350" height="1" fill="#fff" fill-opacity="0.44"/>
<rect x="559.10" y="829" width="1" height="176" fill="#fff" fill-opacity="0.44"/>
<rect x="659.05" y="829" width="1" height="176" fill="#fff" fill-opacity="0.44"/>
<rect x="759.00" y="829" width="1" height="176" fill="#fff" fill-opacity="0.44"/>
<rect x="461" y="828" width="353" height="2" fill="#404040"/>
<rect x="461" y="1005" width="353" height="2" fill="#3c3c3c"/>
<rect x="812" y="828" width="2" height="178" fill="#484848"/>
<rect x="461" y="829" width="1" height="177" fill="#888"/>
<text x="458" y="832.1" text-anchor="end" class="yl" textLength="23.77" lengthAdjust="spacingAndGlyphs">160.0</text>
<text x="458" y="876.1" text-anchor="end" class="yl" textLength="23.77" lengthAdjust="spacingAndGlyphs">140.0</text>
<text x="458" y="920.1" text-anchor="end" class="yl" textLength="23.77" lengthAdjust="spacingAndGlyphs">120.0</text>
<text x="458" y="964.1" text-anchor="end" class="yl" textLength="23.77" lengthAdjust="spacingAndGlyphs">100.0</text>
<text x="458" y="1008.1" text-anchor="end" class="yl" textLength="18.49" lengthAdjust="spacingAndGlyphs">80.0</text>
<text x="559.6" y="1021" text-anchor="middle" class="xl" textLength="24.27" lengthAdjust="spacingAndGlyphs">10:10</text>
<text x="659.6" y="1021" text-anchor="middle" class="xl" textLength="24.27" lengthAdjust="spacingAndGlyphs">10:20</text>
<text x="759.5" y="1021" text-anchor="middle" class="xl" textLength="24.27" lengthAdjust="spacingAndGlyphs">10:30</text>
<text x="622.3" y="816" text-anchor="middle" class="tt" textLength="90.6" lengthAdjust="spacingAndGlyphs">jmeter.all.a.pct90</text>
<rect x="443.5" y="1031.5" width="8.6" height="8.6" fill="#6464ff" stroke="#777" stroke-width="1"/>
<text x="456.5" y="1039" class="lg" textLength="74.41559999999998" lengthAdjust="spacingAndGlyphs">jmeter.all.a.pct90</text>
<polyline points="753.5,960.0 755.0,892.4 756.5,960.0 759.0,975.0 761.4,851.9 764.0,990.0 767.0,960.0 769.7,924.4 772.0,960.0 776.4,937.9 778.0,960.0 779.6,924.4 782.0,960.0 786.3,937.9 788.0,960.0 791.1,925.4 793.3,927.9 795.0,960.0 797.9,936.0 800.0,960.0 803.0,955.0 806.7,937.2 807.9,936.6 810.4,926.0 812.0,927.0" fill="none" stroke="#6464ff" stroke-width="1.2" stroke-linejoin="miter"/><rect x="892.14" y="829" width="1" height="176" fill="#fff" fill-opacity="0.2"/>
<rect x="912.13" y="829" width="1" height="176" fill="#fff" fill-opacity="0.2"/>
<rect x="932.12" y="829" width="1" height="176" fill="#fff" fill-opacity="0.2"/>
<rect x="952.11" y="829" width="1" height="176" fill="#fff" fill-opacity="0.2"/>
<rect x="992.09" y="829" width="1" height="176" fill="#fff" fill-opacity="0.2"/>
<rect x="1012.08" y="829" width="1" height="176" fill="#fff" fill-opacity="0.2"/>
<rect x="1032.07" y="829" width="1" height="176" fill="#fff" fill-opacity="0.2"/>
<rect x="1052.06" y="829" width="1" height="176" fill="#fff" fill-opacity="0.2"/>
<rect x="1092.04" y="829" width="1" height="176" fill="#fff" fill-opacity="0.2"/>
<rect x="1112.03" y="829" width="1" height="176" fill="#fff" fill-opacity="0.2"/>
<rect x="1132.02" y="829" width="1" height="176" fill="#fff" fill-opacity="0.2"/>
<rect x="1152.01" y="829" width="1" height="176" fill="#fff" fill-opacity="0.2"/>
<rect x="1191.99" y="829" width="1" height="176" fill="#fff" fill-opacity="0.2"/>
<rect x="1211.98" y="829" width="1" height="176" fill="#fff" fill-opacity="0.2"/>
<rect x="875" y="851" width="350" height="1" fill="#fff" fill-opacity="0.2"/>
<rect x="875" y="895" width="350" height="1" fill="#fff" fill-opacity="0.2"/>
<rect x="875" y="939" width="350" height="1" fill="#fff" fill-opacity="0.2"/>
<rect x="875" y="983" width="350" height="1" fill="#fff" fill-opacity="0.2"/>
<rect x="875" y="873" width="350" height="1" fill="#fff" fill-opacity="0.44"/>
<rect x="875" y="917" width="350" height="1" fill="#fff" fill-opacity="0.44"/>
<rect x="875" y="961" width="350" height="1" fill="#fff" fill-opacity="0.44"/>
<rect x="972.10" y="829" width="1" height="176" fill="#fff" fill-opacity="0.44"/>
<rect x="1072.05" y="829" width="1" height="176" fill="#fff" fill-opacity="0.44"/>
<rect x="1172.00" y="829" width="1" height="176" fill="#fff" fill-opacity="0.44"/>
<rect x="874" y="828" width="353" height="2" fill="#404040"/>
<rect x="874" y="1005" width="353" height="2" fill="#3c3c3c"/>
<rect x="1225" y="828" width="2" height="178" fill="#484848"/>
<rect x="874" y="829" width="1" height="177" fill="#888"/>
<text x="871" y="832.1" text-anchor="end" class="yl" textLength="23.77" lengthAdjust="spacingAndGlyphs">160.0</text>
<text x="871" y="876.1" text-anchor="end" class="yl" textLength="23.77" lengthAdjust="spacingAndGlyphs">140.0</text>
<text x="871" y="920.1" text-anchor="end" class="yl" textLength="23.77" lengthAdjust="spacingAndGlyphs">120.0</text>
<text x="871" y="964.1" text-anchor="end" class="yl" textLength="23.77" lengthAdjust="spacingAndGlyphs">100.0</text>
<text x="871" y="1008.1" text-anchor="end" class="yl" textLength="18.49" lengthAdjust="spacingAndGlyphs">80.0</text>
<text x="972.6" y="1021" text-anchor="middle" class="xl" textLength="24.27" lengthAdjust="spacingAndGlyphs">10:10</text>
<text x="1072.5" y="1021" text-anchor="middle" class="xl" textLength="24.27" lengthAdjust="spacingAndGlyphs">10:20</text>
<text x="1172.5" y="1021" text-anchor="middle" class="xl" textLength="24.27" lengthAdjust="spacingAndGlyphs">10:30</text>
<text x="1035.3" y="816" text-anchor="middle" class="tt" textLength="90.6" lengthAdjust="spacingAndGlyphs">jmeter.all.a.pct95</text>
<rect x="856.5" y="1031.5" width="8.6" height="8.6" fill="#6464ff" stroke="#777" stroke-width="1"/>
<text x="869.5" y="1039" class="lg" textLength="74.41559999999998" lengthAdjust="spacingAndGlyphs">jmeter.all.a.pct95</text>
<polyline points="1163.2,919.8 1165.5,920.4 1166.5,922.3 1168.0,860.6 1169.4,945.0 1171.4,911.1 1172.9,921.7 1174.6,840.1 1177.9,950.0 1179.8,917.9 1181.4,915.4 1182.9,853.1 1185.4,950.0 1187.9,919.2 1189.1,921.7 1192.9,860.0 1194.7,945.0 1197.2,908.0 1199.3,929.2 1202.8,883.0 1207.2,924.2 1209.7,945.0 1210.9,865.6 1213.0,854.4 1215.3,920.4 1216.5,927.9 1217.8,908.0 1219.7,925.4 1220.9,875.6 1222.8,866.9 1224.6,886.8" fill="none" stroke="#6464ff" stroke-width="1.2" stroke-linejoin="miter"/><rect x="1305.14" y="829" width="1" height="176" fill="#fff" fill-opacity="0.2"/>
<rect x="1325.13" y="829" width="1" height="176" fill="#fff" fill-opacity="0.2"/>
<rect x="1345.12" y="829" width="1" height="176" fill="#fff" fill-opacity="0.2"/>
<rect x="1365.11" y="829" width="1" height="176" fill="#fff" fill-opacity="0.2"/>
<rect x="1405.09" y="829" width="1" height="176" fill="#fff" fill-opacity="0.2"/>
<rect x="1425.08" y="829" width="1" height="176" fill="#fff" fill-opacity="0.2"/>
<rect x="1445.07" y="829" width="1" height="176" fill="#fff" fill-opacity="0.2"/>
<rect x="1465.06" y="829" width="1" height="176" fill="#fff" fill-opacity="0.2"/>
<rect x="1505.04" y="829" width="1" height="176" fill="#fff" fill-opacity="0.2"/>
<rect x="1525.03" y="829" width="1" height="176" fill="#fff" fill-opacity="0.2"/>
<rect x="1545.02" y="829" width="1" height="176" fill="#fff" fill-opacity="0.2"/>
<rect x="1565.01" y="829" width="1" height="176" fill="#fff" fill-opacity="0.2"/>
<rect x="1604.99" y="829" width="1" height="176" fill="#fff" fill-opacity="0.2"/>
<rect x="1624.98" y="829" width="1" height="176" fill="#fff" fill-opacity="0.2"/>
<rect x="1288" y="851" width="350" height="1" fill="#fff" fill-opacity="0.2"/>
<rect x="1288" y="895" width="350" height="1" fill="#fff" fill-opacity="0.2"/>
<rect x="1288" y="939" width="350" height="1" fill="#fff" fill-opacity="0.2"/>
<rect x="1288" y="983" width="350" height="1" fill="#fff" fill-opacity="0.2"/>
<rect x="1288" y="873" width="350" height="1" fill="#fff" fill-opacity="0.44"/>
<rect x="1288" y="917" width="350" height="1" fill="#fff" fill-opacity="0.44"/>
<rect x="1288" y="961" width="350" height="1" fill="#fff" fill-opacity="0.44"/>
<rect x="1385.10" y="829" width="1" height="176" fill="#fff" fill-opacity="0.44"/>
<rect x="1485.05" y="829" width="1" height="176" fill="#fff" fill-opacity="0.44"/>
<rect x="1585.00" y="829" width="1" height="176" fill="#fff" fill-opacity="0.44"/>
<rect x="1287" y="828" width="353" height="2" fill="#404040"/>
<rect x="1287" y="1005" width="353" height="2" fill="#3c3c3c"/>
<rect x="1638" y="828" width="2" height="178" fill="#484848"/>
<rect x="1287" y="829" width="1" height="177" fill="#888"/>
<text x="1284" y="832.1" text-anchor="end" class="yl" textLength="23.77" lengthAdjust="spacingAndGlyphs">300.0</text>
<text x="1284" y="876.1" text-anchor="end" class="yl" textLength="23.77" lengthAdjust="spacingAndGlyphs">250.0</text>
<text x="1284" y="920.1" text-anchor="end" class="yl" textLength="23.77" lengthAdjust="spacingAndGlyphs">200.0</text>
<text x="1284" y="964.1" text-anchor="end" class="yl" textLength="23.77" lengthAdjust="spacingAndGlyphs">150.0</text>
<text x="1284" y="1008.1" text-anchor="end" class="yl" textLength="23.77" lengthAdjust="spacingAndGlyphs">100.0</text>
<text x="1385.6" y="1021" text-anchor="middle" class="xl" textLength="24.27" lengthAdjust="spacingAndGlyphs">10:10</text>
<text x="1485.5" y="1021" text-anchor="middle" class="xl" textLength="24.27" lengthAdjust="spacingAndGlyphs">10:20</text>
<text x="1585.5" y="1021" text-anchor="middle" class="xl" textLength="24.27" lengthAdjust="spacingAndGlyphs">10:30</text>
<text x="1448.3" y="816" text-anchor="middle" class="tt" textLength="90.6" lengthAdjust="spacingAndGlyphs">jmeter.all.a.pct99</text>
<rect x="1269.5" y="1031.5" width="8.6" height="8.6" fill="#6464ff" stroke="#777" stroke-width="1"/>
<text x="1282.5" y="1039" class="lg" textLength="74.41559999999998" lengthAdjust="spacingAndGlyphs">jmeter.all.a.pct99</text>
<polyline points="1575.3,903.6 1577.5,919.8 1579.1,847.5 1580.7,927.3 1582.2,921.7 1584.7,908.0 1585.9,936.6 1587.4,879.3 1589.4,881.2 1591.5,960.0 1592.4,936.6 1594.0,960.0 1595.9,931.0 1597.5,960.0 1600.3,936.0 1603.4,931.6 1605.6,896.8 1607.7,960.0 1612.3,920.4 1614.0,960.0 1618.0,955.0 1620.8,936.0 1625.8,929.2 1627.5,960.0 1630.2,937.2 1633.9,867.5 1638.0,930.4" fill="none" stroke="#6464ff" stroke-width="1.2" stroke-linejoin="miter"/>
</svg>
</body></html>
